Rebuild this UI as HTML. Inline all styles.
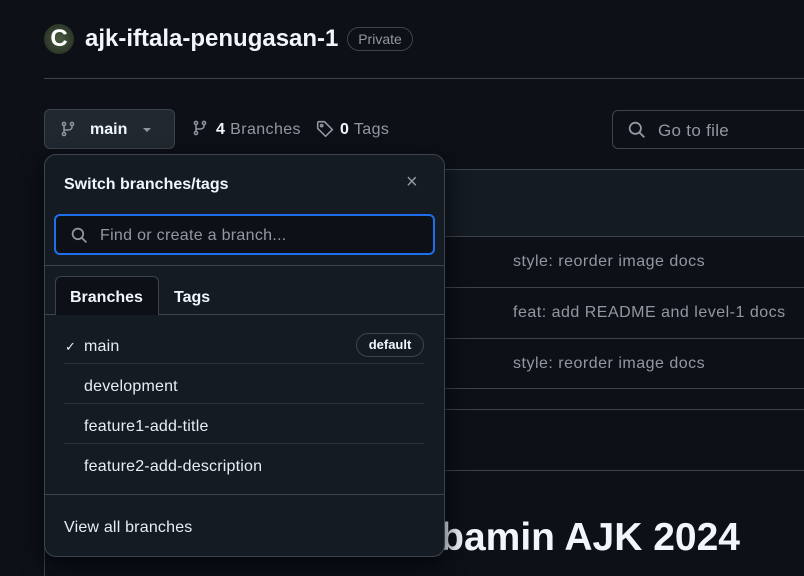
<!DOCTYPE html>
<html><head><style>
*{box-sizing:border-box;margin:0;padding:0}
html,body{width:804px;height:576px;overflow:hidden}
body{background:#0d1117;font-family:"Liberation Sans",sans-serif;color:#f0f6fc;position:relative}
.a{position:absolute}
.row{position:absolute;left:44px;right:-10px;border-top:1px solid #3d444d}
.msg{position:absolute;left:513px;font-size:16px;color:#9198a1;letter-spacing:.5px}
.it{position:absolute;left:84px;font-size:16px;color:#e6edf3;letter-spacing:.2px}
.sep{position:absolute;left:64px;width:360px;border-top:1px solid #2a313c}
</style></head><body>
<div class="a" style="left:44px;top:24px;width:30px;height:30px;border-radius:50%;background:radial-gradient(circle,#4a5a40,#20281e);color:#fff;font-weight:bold;font-size:24px;line-height:30px;text-align:center">C</div>
<div class="a" style="left:85px;top:25px;font-size:24px;font-weight:bold;color:#f0f6fc">ajk-iftala-penugasan-1</div>
<div class="a" style="left:347px;top:27px;width:66px;height:24px;border:1px solid #3d444d;border-radius:12px;color:#9198a1;font-size:14px;line-height:22px;text-align:center">Private</div>
<div class="a" style="left:44px;top:78px;right:0;border-top:1px solid #3d444d"></div>
<div class="a" style="left:44px;top:109px;width:131px;height:40px;border:1px solid #3d444d;border-radius:6px;background:#212830"></div>
<svg class="a" style="left:60px;top:121px" width="16" height="16" viewBox="0 0 16 16" fill="none" stroke="#9198a1" stroke-width="1.5"><circle cx="4" cy="3" r="1.6"/><circle cx="12" cy="3" r="1.6"/><circle cx="4" cy="13" r="1.6"/><path d="M4 4.6v6.8M12 4.6v1.4c0 2-2 3-4 3H4"/></svg>
<div class="a" style="left:90px;top:121px;font-size:16px;font-weight:bold">main</div>
<div class="a" style="left:143px;top:128px;border:4px solid transparent;border-top-color:#9198a1"></div>
<svg class="a" style="left:192px;top:120px" width="16" height="16" viewBox="0 0 16 16" fill="none" stroke="#9198a1" stroke-width="1.5"><circle cx="4" cy="3" r="1.6"/><circle cx="12" cy="3" r="1.6"/><circle cx="4" cy="13" r="1.6"/><path d="M4 4.6v6.8M12 4.6v1.4c0 2-2 3-4 3H4"/></svg>
<div class="a" style="left:216px;top:121px;font-size:16px;color:#9198a1;letter-spacing:.4px"><b style="color:#f0f6fc">4</b> Branches</div>
<svg class="a" style="left:316px;top:120px" width="18" height="18" viewBox="0 0 16 16" fill="none" stroke="#9198a1" stroke-width="1.4"><path d="M1.5 2.5v5l7 7 6-6-7-7h-5a1 1 0 0 0-1 1z"/><circle cx="5" cy="5" r="1"/></svg>
<div class="a" style="left:340px;top:121px;font-size:16px;color:#9198a1;letter-spacing:.4px"><b style="color:#f0f6fc">0</b> Tags</div>
<div class="a" style="left:612px;top:110px;width:200px;height:39px;border:1px solid #3d444d;border-radius:6px"></div>
<svg class="a" style="left:628px;top:121px" width="18" height="18" viewBox="0 0 16 16" fill="none" stroke="#9198a1" stroke-width="1.6"><circle cx="6.5" cy="6.5" r="5"/><path d="M10.2 10.2l4.3 4.3"/></svg>
<div class="a" style="left:658px;top:121px;font-size:17px;color:#9198a1;letter-spacing:.3px">Go to file</div>
<div class="a" style="left:44px;top:169px;right:-10px;height:67px;background:#151b23;border-top:1px solid #3d444d;border-left:1px solid #3d444d"></div>
<div class="a" style="left:44px;top:169px;width:1px;height:407px;background:#3d444d"></div>
<div class="row" style="top:236px"></div><div class="row" style="top:287px"></div><div class="row" style="top:338px"></div><div class="row" style="top:388px"></div><div class="row" style="top:409px"></div><div class="row" style="top:470px"></div>
<div class="msg" style="top:253px">style: reorder image docs</div>
<div class="msg" style="top:304px">feat: add README and level-1 docs</div>
<div class="msg" style="top:355px">style: reorder image docs</div>
<div class="a" style="left:440px;top:516px;font-size:39px;font-weight:bold;color:#f0f6fc;width:300px;text-align:right">bamin AJK 2024</div>
<div class="a" style="left:44px;top:154px;width:401px;height:403px;background:#151b23;border:1px solid #3d444d;border-radius:12px;box-shadow:0 8px 24px rgba(1,4,9,.8)">
<div class="a" style="left:19px;top:21px;font-size:16px;font-weight:bold">Switch branches/tags</div>
<div class="a" style="left:361px;top:16px;font-size:20px;color:#9198a1">×</div>
<div class="a" style="left:9px;top:59px;width:381px;height:41px;border:2px solid #1f6feb;border-radius:6px;background:#0d1117"></div>
<svg class="a" style="left:26px;top:72px" width="17" height="17" viewBox="0 0 16 16" fill="none" stroke="#9198a1" stroke-width="1.6"><circle cx="6.5" cy="6.5" r="5"/><path d="M10.2 10.2l4.3 4.3"/></svg>
<div class="a" style="left:55px;top:72px;font-size:16px;color:#9198a1;letter-spacing:.3px">Find or create a branch...</div>
<div class="a" style="left:0;top:110px;width:399px;border-top:1px solid #3d444d"></div>
<div class="a" style="left:0;top:159px;width:399px;border-top:1px solid #3d444d"></div>
<div class="a" style="left:10px;top:121px;width:104px;height:39px;background:#0d1117;border:1px solid #3d444d;border-bottom:none;border-radius:6px 6px 0 0"></div>
<div class="a" style="left:25px;top:134px;font-size:16px;font-weight:bold">Branches</div>
<div class="a" style="left:129px;top:134px;font-size:16px;font-weight:bold">Tags</div>
<div class="a" style="left:0;top:339px;width:399px;border-top:1px solid #3d444d"></div>
</div>
<div class="a" style="left:65px;top:339px;font-size:13px;color:#e6edf3">✓</div>
<div class="it" style="top:338px">main</div>
<div class="a" style="left:356px;top:333px;width:68px;height:24px;border:1px solid #3d444d;border-radius:12px;font-size:13px;font-weight:bold;line-height:22px;text-align:center">default</div>
<div class="sep" style="top:363px"></div>
<div class="it" style="top:378px">development</div>
<div class="sep" style="top:403px"></div>
<div class="it" style="top:418px">feature1-add-title</div>
<div class="sep" style="top:443px"></div>
<div class="it" style="top:458px">feature2-add-description</div>
<div class="a" style="left:64px;top:519px;font-size:16px;color:#e6edf3;letter-spacing:.2px">View all branches</div>
</body></html>
